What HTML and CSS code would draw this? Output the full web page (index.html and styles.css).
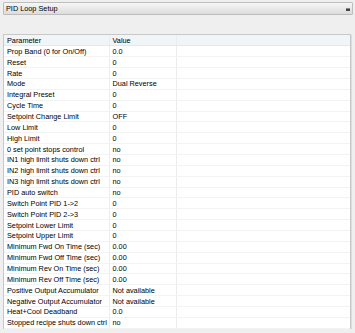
FILE: index.html
```html
<!DOCTYPE html>
<html lang="en">
<head>
    <meta charset="UTF-8">
    <meta name="viewport" content="width=device-width, initial-scale=1.0">
    <title>PID Loop Setup</title>
    <link rel="stylesheet" href="styles.css">
</head>
<body>
    <div class="select">
        <span>PID Loop Setup</span>
        <span class="arrow"></span>
    </div>

    <div class="panel">
        <table class="params">
            <colgroup>
                <col class="col-name">
                <col class="col-value">
                <col>
            </colgroup>
            <thead>
                <tr><th>Parameter</th><th>Value</th><th></th></tr>
            </thead>
            <tbody id="rows"></tbody>
        </table>
    </div>

    <script>
        const params = [
            ['Prop Band (0 for On/Off)', '0.0'],
            ['Reset', '0'],
            ['Rate', '0'],
            ['Mode', 'Dual Reverse'],
            ['Integral Preset', '0'],
            ['Cycle Time', '0'],
            ['Setpoint Change Limit', 'OFF'],
            ['Low Limit', '0'],
            ['High Limit', '0'],
            ['0 set point stops control', 'no'],
            ['IN1 high limit shuts down ctrl', 'no'],
            ['IN2 high limit shuts down ctrl', 'no'],
            ['IN3 high limit shuts down ctrl', 'no'],
            ['PID auto switch', 'no'],
            ['Switch Point PID 1->2', '0'],
            ['Switch Point PID 2->3', '0'],
            ['Setpoint Lower Limit', '0'],
            ['Setpoint Upper Limit', '0'],
            ['Minimum Fwd On Time (sec)', '0.00'],
            ['Minimum Fwd Off Time (sec)', '0.00'],
            ['Minimum Rev On Time (sec)', '0.00'],
            ['Minimum Rev Off Time (sec)', '0.00'],
            ['Positive Output Accumulator', 'Not available'],
            ['Negative Output Accumulator', 'Not available'],
            ['Heat+Cool Deadband', '0.0'],
            ['Stopped recipe shuts down ctrl', 'no']
        ];

        const tbody = document.getElementById('rows');
        params.forEach(([name, value]) => {
            const tr = document.createElement('tr');
            [name, value, ''].forEach(text => {
                const td = document.createElement('td');
                td.textContent = text;
                tr.appendChild(td);
            });
            tbody.appendChild(tr);
        });
    </script>
</body>
</html>
```

FILE: styles.css
```css
* {
    margin: 0;
    padding: 0;
    box-sizing: border-box;
}

body {
    background: #efefef;
    font-family: "Liberation Sans", Arial, sans-serif;
    font-size: 7.3px;
    color: #000;
    padding: 2px 2px 0 3px;
}

.select {
    height: 13px;
    border: 1px solid #bdbdbd;
    border-radius: 1px;
    background: linear-gradient(#f6f6f6, #dcdcdc);
    display: flex;
    align-items: center;
    justify-content: space-between;
    padding: 0 2px 0 2px;
}

.arrow {
    width: 4px;
    height: 3px;
    background: #444;
    border-top: 1px solid #888;
    margin-top: 1px;
}

.panel {
    margin-top: 19px;
    margin-right: 2px;
    height: 295px;
    background: #fff;
    border: 1px solid #c8c8c8;
    box-shadow: 1px 1px 0 #dcdcdc;
}

.params {
    width: 100%;
    border-collapse: collapse;
    table-layout: fixed;
}

.col-name {
    width: 105px;
}

.col-value {
    width: 67px;
}

.params th,
.params td {
    height: 10.86px;
    padding: 0 0 0 3px;
    text-align: left;
    font-weight: normal;
    white-space: nowrap;
    overflow: hidden;
    border-right: 1px solid #ececec;
    border-bottom: 1px solid #f3f3f3;
}

.params th {
    background: #f1f5f8;
    border-bottom: 1px solid #e4e8ec;
}

.params th:last-child,
.params td:last-child {
    border-right: none;
}
```
